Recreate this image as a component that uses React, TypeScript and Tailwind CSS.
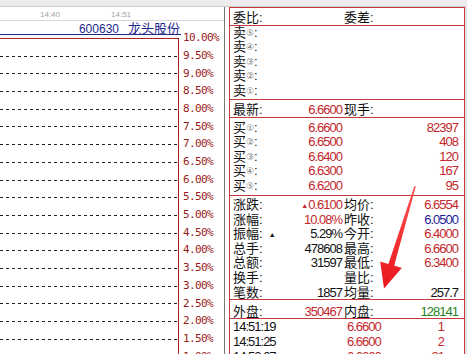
import type { ReactNode } from "react";

const RED = "text-[#c3272b]";
const BLUE = "text-[#1c1c9c]";
const GREEN = "text-[#1f7f24]";
const NUM = "tracking-[-1px]";

const levels = [
  "10.00%", "9.50%", "9.00%", "8.50%", "8.00%", "7.50%", "7.00%", "6.50%", "6.00%", "5.50%",
  "5.00%", "4.50%", "4.00%", "3.50%", "3.00%", "2.50%", "2.00%", "1.50%", "1.00%", "0.50%",
];

function ChartPane() {
  return (
    <div className="flex w-[225px] shrink-0 flex-col border-r border-[#777777]">
      {/* time axis */}
      <div className="flex h-[14px] shrink-0 gap-[51px] border-b border-[#d6d6d6] pl-[40px] pt-[3px] text-[8px] leading-[9px] text-[#a3a3a3]">
        <span>14:40</span>
        <span>14:51</span>
      </div>
      <div className="flex">
        <div className="w-[181px] shrink-0">
          <div className="h-[14px] border-b border-[#1f2a8a] pr-[1px] text-right leading-[13px] text-[#1f2a90]">
            <span className="text-[12px]">600630</span>
            <span className="ml-[9px] text-[13px]">龙头股份</span>
          </div>
          <div className="h-[3px]" />
          <div className="w-[179px] border-t border-r border-[#a82222]">
            {levels.slice(1).map((l) => (
              <div key={l} className="flex h-[17.7px] flex-col justify-end">
                <div className="h-px bg-[repeating-linear-gradient(90deg,#222_0_3px,transparent_3px_6px)]" />
              </div>
            ))}
          </div>
        </div>
        <div className="flex-1 pt-[8.65px] font-['DejaVu_Sans_Mono',monospace] text-[11px] tracking-[-0.6px] text-[#9a1a1a]">
          {levels.map((l) => (
            <div key={l} className="flex h-[17.7px] items-center pl-[2px]">
              {l}
            </div>
          ))}
        </div>
      </div>
    </div>
  );
}

function Circ({ n }: { n: string }) {
  return (
    <span className="relative top-[-1px] font-['DejaVu_Sans','Noto_Sans_CJK_SC',sans-serif] text-[9px] text-[#7a7a7a]">
      {n}
    </span>
  );
}

function Line({
  l1,
  v1,
  l2,
  v2,
  h = "h-[14.4px] leading-[14.4px]",
}: {
  l1?: ReactNode;
  v1?: ReactNode;
  l2?: ReactNode;
  v2?: ReactNode;
  h?: string;
}) {
  return (
    <div className={`flex ${h}`}>
      <div className="flex w-[109px] shrink-0 justify-between">
        <span>{l1}</span>
        <span>{v1}</span>
      </div>
      <div className="ml-[2px] flex flex-1 justify-between">
        <span>{l2}</span>
        <span>{v2}</span>
      </div>
    </div>
  );
}

const asks = ["⑤", "④", "③", "②", "①"];
const bids = [
  { n: "①", p: "6.6600", v: "82397" },
  { n: "②", p: "6.6500", v: "408" },
  { n: "③", p: "6.6400", v: "120" },
  { n: "④", p: "6.6300", v: "167" },
  { n: "⑤", p: "6.6200", v: "95" },
];

const ticks = [
  { t: "14:51:19", p: "6.6600", v: "1" },
  { t: "14:51:25", p: "6.6600", v: "2" },
  { t: "14:52:07", p: "6.6600", v: "21" },
];

function QuotePanel() {
  const sec = "overflow-hidden border-b border-[#c23a3a] pl-[3px] pr-[6px]";
  const STAT = "h-[14.6px] leading-[14.6px]";
  return (
    <div className="w-[236px] shrink-0 border border-b-0 border-[#c23a3a] text-[13px]">
      <div className={`h-[18px] pt-[2px] ${sec}`}>
        <Line h="h-[15px] leading-[15px]" l1="委比:" l2="委差:" />
      </div>

      <div className={`h-[74px] ${sec}`}>
        {asks.map((n) => (
          <div key={n} className="h-[14.4px] leading-[14.4px]">
            卖<Circ n={n} />:
          </div>
        ))}
      </div>

      <div className={`h-[18px] pt-[3px] ${sec}`}>
        <Line
          h="h-[14px] leading-[14px]"
          l1="最新:"
          v1={<span className={`${RED} ${NUM}`}>6.6600</span>}
          l2="现手:"
        />
      </div>

      <div className={`h-[78px] pt-[3px] ${sec}`}>
        {bids.map((b) => (
          <Line
            key={b.n}
            l1={
              <>
                买<Circ n={b.n} />:
              </>
            }
            v1={<span className={`${RED} ${NUM}`}>{b.p}</span>}
            v2={<span className={`${RED} ${NUM}`}>{b.v}</span>}
          />
        ))}
      </div>

      <div className={`h-[104px] pt-[2px] ${sec}`}>
        <Line
          h={STAT}
          l1="涨跌:"
          v1={
            <span className={RED}>
              <span className="relative top-[-1px] text-[7px]">▲</span>
              <span className={NUM}>0.6100</span>
            </span>
          }
          l2="均价:"
          v2={<span className={`${RED} ${NUM}`}>6.6554</span>}
        />
        <Line
          h={STAT}
          l1="涨幅:"
          v1={<span className={`${RED} ${NUM}`}>10.08%</span>}
          l2="昨收:"
          v2={<span className={`${BLUE} ${NUM}`}>6.0500</span>}
        />
        <Line
          h={STAT}
          l1={
            <>
              振幅:<span className="relative top-[-1px] ml-[6px] text-[7px]">▲</span>
            </>
          }
          v1={<span className={NUM}>5.29%</span>}
          l2="今开:"
          v2={<span className={`${RED} ${NUM}`}>6.4000</span>}
        />
        <Line
          h={STAT}
          l1="总手:"
          v1={<span className={NUM}>478608</span>}
          l2="最高:"
          v2={<span className={`${RED} ${NUM}`}>6.6600</span>}
        />
        <Line
          h={STAT}
          l1="总额:"
          v1={<span className={NUM}>31597</span>}
          l2="最低:"
          v2={<span className={`${RED} ${NUM}`}>6.3400</span>}
        />
        <Line h={STAT} l1="换手:" l2="量比:" />
        <Line
          h={STAT}
          l1="笔数:"
          v1={<span className={NUM}>1857</span>}
          l2="均量:"
          v2={<span className={NUM}>257.7</span>}
        />
      </div>

      <div className={`h-[19px] pt-[5px] ${sec}`}>
        <Line
          h="h-[14px] leading-[14px]"
          l1="外盘:"
          v1={<span className={`${RED} ${NUM}`}>350467</span>}
          l2="内盘:"
          v2={<span className={`${GREEN} ${NUM}`}>128141</span>}
        />
      </div>

      <div className="pl-[3px]">
        {ticks.map((t) => (
          <div key={t.t} className="flex h-[15px] leading-[15px]">
            <span className={`w-[114px] shrink-0 ${NUM}`}>{t.t}</span>
            <div className={`flex w-[97px] justify-between ${RED} ${NUM}`}>
              <span>{t.p}</span>
              <span>{t.v}</span>
            </div>
          </div>
        ))}
      </div>
    </div>
  );
}

function Arrow() {
  return (
    <svg
      className="pointer-events-none absolute left-0 top-0"
      width="467"
      height="354"
      viewBox="0 0 467 354"
    >
      <defs>
        <linearGradient id="arw" x1="0" y1="0" x2="0" y2="1">
          <stop offset="0" stopColor="#ff5050" />
          <stop offset="1" stopColor="#e8161c" />
        </linearGradient>
      </defs>
      <polygon
        points="414.4,186 415.8,186.4 394.2,265.5 401.8,268 384,288.5 380.2,261.6 388.4,263.9"
        fill="url(#arw)"
      />
    </svg>
  );
}

export default function App() {
  return (
    <div className="relative h-[354px] w-[467px] overflow-hidden bg-white font-['Liberation_Sans','Noto_Sans_CJK_SC',sans-serif] text-[#111111]">
      <div className="h-[7px] border-b border-[#cdcdcd] bg-[#ececec]" />
      <div className="flex h-[347px]">
        <ChartPane />
        <div className="w-[4px] shrink-0 bg-white" />
        <QuotePanel />
        <div className="w-[2px] shrink-0 bg-[#e8e2e2]" />
      </div>
      <Arrow />
    </div>
  );
}
